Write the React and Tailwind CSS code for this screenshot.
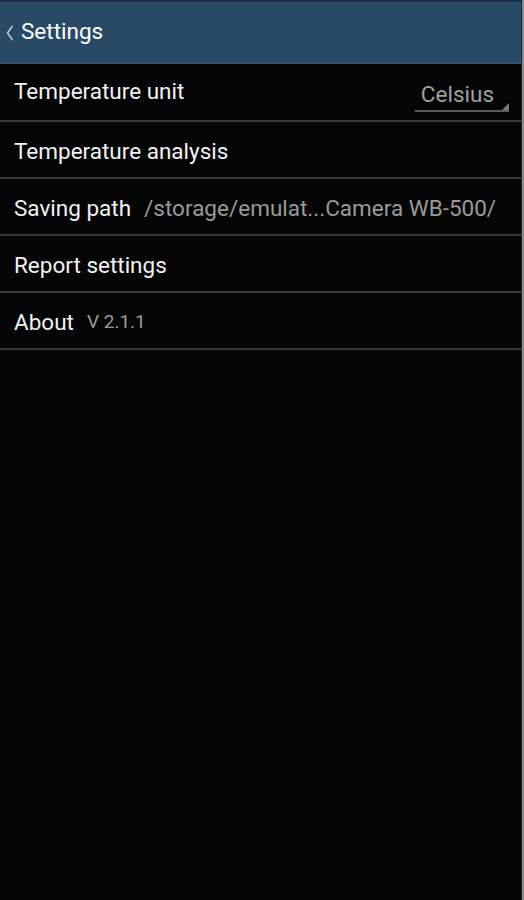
import React from 'react';

const rows = [
  { label: 'Temperature unit', type: 'select', value: 'Celsius', first: true },
  { label: 'Temperature analysis' },
  { label: 'Saving path', value: '/storage/emulat...Camera WB-500/' },
  { label: 'Report settings' },
  { label: 'About', value: 'V 2.1.1', small: true },
];

const SettingRow = ({ row }) => (
  <div
    className={`flex items-center pl-[14px] pr-[12px] border-b-2 border-[#383838] ${
      row.first ? 'h-[58px]' : 'h-[57px] pt-[4px]'
    }`}
  >
    <span className="text-[22.5px] text-[#f2f2f2] whitespace-nowrap">{row.label}</span>
    {row.type === 'select' ? (
      <div className="ml-auto relative mt-[8px] pl-[6px] pr-[15px] pb-[3px] border-b-2 border-[#5a5a5a]">
        <span className="block text-[22.5px] leading-[26px] text-[#a0a0a0]">{row.value}</span>
        <svg className="absolute right-0 bottom-0" width="7" height="7" viewBox="0 0 7 7">
          <path d="M7 0 L7 7 L0 7 Z" fill="#7a7a7a" />
        </svg>
      </div>
    ) : row.value ? (
      <span
        className={`whitespace-nowrap text-[#9a9a9a] ${
          row.small ? 'ml-[13px] text-[19px]' : 'ml-[13px] text-[22.5px]'
        }`}
      >
        {row.value}
      </span>
    ) : null}
  </div>
);

export default function App() {
  return (
    <div
      className="w-[524px] h-[900px] bg-[#050505] flex"
      style={{ fontFamily: 'Roboto, "Liberation Sans", sans-serif' }}
    >
      <div className="flex-1 flex flex-col border-r border-[#1a2a3a]">
        <div className="h-[2px] bg-[#1e3346]" />
        <div className="h-[62px] bg-[#284a65] border-b-2 border-[#2e5572] flex items-center pl-[5px]">
          <svg width="9" height="16" viewBox="0 0 9 16" className="mr-[7px] mt-[1px]">
            <path d="M7.5 1 L2.5 8 L7.5 15" fill="none" stroke="#b3c6d4" strokeWidth="1.6" />
          </svg>
          <span className="text-[22.5px] text-white">Settings</span>
        </div>
        {rows.map((row) => (
          <SettingRow key={row.label} row={row} />
        ))}
      </div>
      <div className="w-[2px] bg-[#8a8a8a]" />
    </div>
  );
}
